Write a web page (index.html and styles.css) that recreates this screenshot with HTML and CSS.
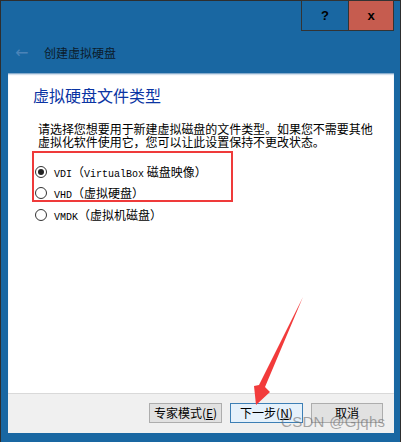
FILE: index.html
```html
<!DOCTYPE html>
<html lang="zh-CN">
<head>
    <meta charset="UTF-8">
    <title>创建虚拟硬盘</title>
    <link rel="stylesheet" href="styles.css">
</head>
<body>

<div class="window">
    <div class="titlebar">
        <div class="tb-btn help">?</div>
        <div class="tb-btn close">x</div>
    </div>

    <div class="header">
        <span class="back">&#8592;</span>
        <span class="header-title">创建虚拟硬盘</span>
    </div>

    <div class="panel">
        <h1>虚拟硬盘文件类型</h1>
        <p class="intro">请选择您想要用于新建虚拟磁盘的文件类型。如果您不需要其他虚拟化软件使用它，您可以让此设置保持不更改状态。</p>

        <div class="options">
            <div class="option">
                <span class="radio checked"></span>
                <span class="label"><span class="lat">VDI</span>（<span class="lat">VirtualBox</span> 磁盘映像）</span>
            </div>
            <div class="option">
                <span class="radio"></span>
                <span class="label"><span class="lat">VHD</span>（虚拟硬盘）</span>
            </div>
            <div class="option">
                <span class="radio"></span>
                <span class="label"><span class="lat">VMDK</span>（虚拟机磁盘）</span>
            </div>
        </div>
    </div>

    <div class="footer">
        <button class="btn">专家模式(<u>E</u>)</button>
        <button class="btn default">下一步(<u>N</u>)</button>
        <button class="btn">取消</button>
    </div>

    <!-- annotations drawn over the screenshot -->
    <div class="mark-box"></div>
    <svg class="mark-arrow" width="401" height="442" viewBox="0 0 401 442">
        <polygon points="303,297 265,387 270,392 256,405 254,386 259,385" fill="#f23b3b"/>
    </svg>
    <div class="watermark">CSDN @Gjqhs</div>
</div>

</body>
</html>
```

FILE: styles.css
```css
* {
    margin: 0;
    padding: 0;
    box-sizing: border-box;
}

body {
    font-family: "Noto Sans CJK SC", "Liberation Sans", sans-serif;
    font-size: 12px;
    color: #000;
    background: #fff;
}

.window {
    position: relative;
    width: 401px;
    height: 442px;
    background-color: #1967a2;
    border: 1px solid #2e2e2e;
    border-bottom: none;
    display: flex;
    flex-direction: column;
    padding: 0 6px 9px 7px;
}

.titlebar {
    height: 30px;
    margin-top: -1px;
    display: flex;
    justify-content: flex-end;
}

.tb-btn {
    width: 47px;
    height: 31px;
    border: 1px solid #333;
    display: flex;
    align-items: center;
    justify-content: center;
    font-family: "Liberation Sans", sans-serif;
    font-weight: bold;
    font-size: 13px;
    color: #000;
}

.tb-btn.help {
    border-right: none;
}

.tb-btn.close {
    width: 46px;
    background-color: #c65c4f;
}

.header {
    height: 43px;
    display: flex;
    align-items: center;
    padding: 2px 0 0 7px;
}

.back {
    width: 23px;
    color: #4b84b8;
    font-size: 16px;
    font-family: "DejaVu Sans", sans-serif;
}

.header-title {
    margin-left: 6px;
    color: #0c1b2b;
    font-size: 12px;
}

.panel {
    flex: 1;
    background-color: #fff;
    box-shadow: inset 0 2px 2px -1px #5d8fbc;
    padding: 12px 0 0 25px;
}

.panel h1 {
    font-size: 16px;
    font-weight: normal;
    color: #0a34a3;
    line-height: 20px;
}

.intro {
    margin: 17px 14px 0 5px;
    line-height: 13px;
    letter-spacing: -0.05px;
}

.options {
    margin-top: 13px;
    margin-left: 2px;
}

.option {
    height: 21px;
    display: flex;
    align-items: center;
}

.option:last-child {
    margin-top: 1px;
}

.radio {
    width: 12px;
    height: 12px;
    border: 1px solid #333;
    border-radius: 50%;
    background: #fff;
    display: flex;
    align-items: center;
    justify-content: center;
}

.radio.checked::after {
    content: "";
    width: 6px;
    height: 6px;
    border-radius: 50%;
    background: #222;
}

.label {
    margin-left: 7px;
    font-size: 12px;
}

.lat {
    font-family: "Liberation Mono", monospace;
    font-size: 10px;
}

.footer {
    height: 40px;
    background-color: #f0f0f0;
    border-top: 1px solid #d9d9d9;
    display: flex;
    justify-content: flex-end;
    gap: 8px;
    padding: 9px 11px 0 0;
}

.btn {
    width: 73px;
    height: 20px;
    font-family: "Noto Sans CJK SC", "Liberation Sans", sans-serif;
    font-size: 12px;
    line-height: 16px;
    color: #000;
    background-color: #e1e1e1;
    border: 1px solid #adadad;
}

.btn.default {
    background-color: #e5f1fb;
    border-color: #3d7fb5;
}

.btn:last-child {
    width: 72px;
}

.mark-box {
    position: absolute;
    left: 31px;
    top: 150px;
    width: 201px;
    height: 51px;
    border: 2px solid #ef3a3a;
}

.mark-arrow {
    position: absolute;
    left: -1px;
    top: -1px;
}

.watermark {
    position: absolute;
    left: 280px;
    top: 412px;
    font-family: "Liberation Sans", sans-serif;
    font-size: 15px;
    color: rgba(110, 110, 110, 0.6);
    letter-spacing: 0.3px;
}
```
